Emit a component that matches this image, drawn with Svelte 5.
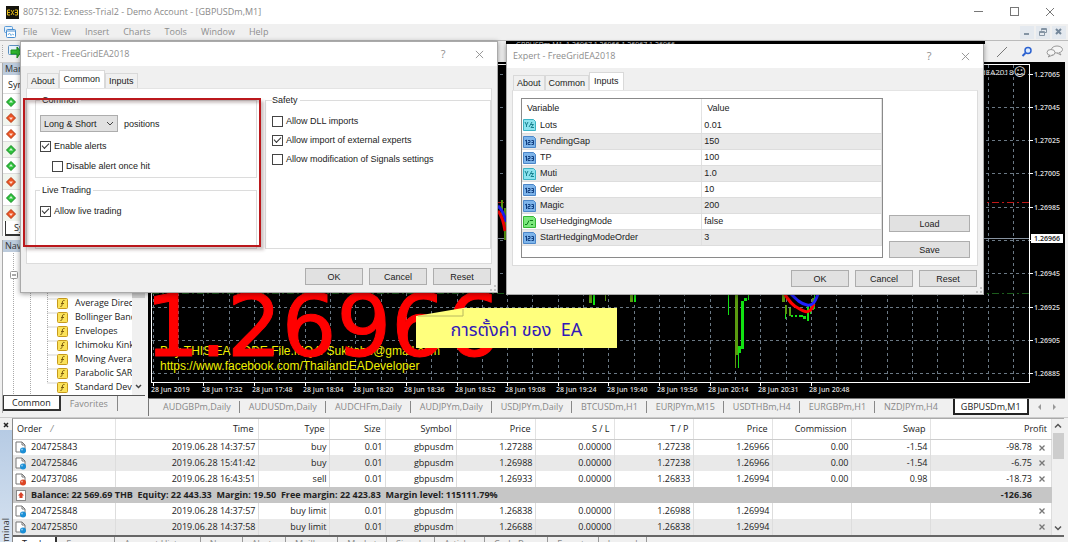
<script>
  const menus = ['File', 'View', 'Insert', 'Charts', 'Tools', 'Window', 'Help'];
  const ticks = ['up', 'down', 'down', 'up', 'up', 'down', 'up', 'down'];
  const indicators = ['Average Directional', 'Bollinger Bands', 'Envelopes', 'Ichimoku Kinko Hyo', 'Moving Average', 'Parabolic SAR', 'Standard Deviation'];
  const charts = ['AUDGBPm,Daily', 'AUDUSDm,Daily', 'AUDCHFm,Daily', 'AUDJPYm,Daily', 'USDJPYm,Daily', 'BTCUSDm,H1', 'EURJPYm,M15', 'USDTHBm,H4', 'EURGBPm,H1', 'NZDJPYm,H4', 'GBPUSDm,M1'];
  const times = ['28 Jun 2019', '28 Jun 17:32', '28 Jun 17:48', '28 Jun 18:04', '28 Jun 18:20', '28 Jun 18:36', '28 Jun 18:52', '28 Jun 19:08', '28 Jun 19:24', '28 Jun 19:40', '28 Jun 19:56', '28 Jun 20:14', '28 Jun 20:31', '28 Jun 20:48'];
  const prices = ['1.27065', '1.27045', '1.27025', '1.27005', '1.26985', '', '1.26945', '1.26925', '1.26905', '1.26885'];
  const inputs = [
    ['Lots', '0.01', 'real'],
    ['PendingGap', '150', 'int'],
    ['TP', '100', 'int'],
    ['Muti', '1.0', 'real'],
    ['Order', '10', 'int'],
    ['Magic', '200', 'int'],
    ['UseHedgingMode', 'false', 'bool'],
    ['StartHedgingModeOrder', '3', 'int']
  ];
  const columns = ['Time', 'Type', 'Size', 'Symbol', 'Price', 'S / L', 'T / P', 'Price', 'Commission', 'Swap'];
  const open = [
    ['204725843', '2019.06.28 14:37:57', 'buy', '0.01', 'gbpusdm', '1.27288', '0.00000', '1.27238', '1.26966', '0.00', '-1.54', '-98.78'],
    ['204725846', '2019.06.28 15:41:42', 'buy', '0.01', 'gbpusdm', '1.26988', '0.00000', '1.27238', '1.26966', '0.00', '-1.54', '-6.75'],
    ['204737086', '2019.06.28 16:43:51', 'sell', '0.01', 'gbpusdm', '1.26933', '0.00000', '1.26833', '1.26994', '0.00', '0.98', '-18.73']
  ];
  const pending = [
    ['204725848', '2019.06.28 14:37:57', 'buy limit', '0.01', 'gbpusdm', '1.26838', '0.00000', '1.26988', '1.26994', '', '', ''],
    ['204725850', '2019.06.28 14:37:58', 'buy limit', '0.01', 'gbpusdm', '1.26688', '0.00000', '1.26838', '1.26994', '', '', '']
  ];
  const terminalTabs = ['Trade', 'Exposure', 'Account History', 'News', 'Alerts', 'Mailbox', 'Market', 'Signals', 'Articles', 'Code Base', 'Experts', 'Journal'];
  // x, top, bottom, width, colour
  const olive = '#5a9a10', lime = '#12e212';
  const candles = [
    [501, 200, 214, 2, olive], [504, 208, 240, 2, olive], [506, 176, 200, 2, lime],
    [589, 294, 303, 3, olive], [593, 294, 305, 2, lime], [605, 294, 301, 1, olive],
    [630, 294, 302, 3, olive], [634, 294, 302, 2, lime],
    [728, 294, 315, 1, lime], [735, 294, 355, 3, olive], [735, 355, 368, 1, olive], [738, 346, 353, 3, lime],
    [738, 352, 368, 1, lime], [741, 301, 349, 3, lime], [744, 298, 301, 3, lime], [748, 294, 300, 1, lime],
    [782, 294, 302, 3, olive], [785, 305, 314, 2, olive], [785, 314, 319, 1, lime], [789, 308, 316, 2, olive],
    [791, 315, 317, 2, lime], [795, 315, 317, 2, lime], [799, 315, 317, 4, lime], [803, 316, 319, 3, lime],
    [807, 306, 321, 2, lime], [810, 306, 314, 1, lime], [812, 298, 310, 2, olive], [814, 294, 309, 1, lime]
  ];
</script>

{#snippet cross(size)}
  <svg width={size} height={size} viewBox="0 0 10 10"><path d="M1 1 9 9M9 1 1 9" fill="none" stroke="currentColor" /></svg>
{/snippet}

{#snippet orderIcon(colour)}
  <svg class="ico" width="12" height="13" viewBox="0 0 12 13">
    <path d="M1 1h6l3 3v7H1z" fill="#fff" stroke="#777" />
    <path d="M7 1v3h3" fill="none" stroke="#777" />
    <circle cx="8" cy="9.500" r="3" fill={colour} />
    <circle cx="7" cy="8.500" r="1" fill="#fff" opacity=".5" />
  </svg>
{/snippet}

{#snippet dealRow(row)}
  <tr>
    <td class="first">{@render orderIcon(row[2] === 'sell' ? '#dd4422' : '#1b8fd6')}{row[0]}</td>
    {#each row.slice(1, 11) as cell}<td>{cell}</td>{/each}
    <td class="profit">{row[11]}<button class="close" aria-label="Close order"><svg width="6" height="6"><path d="M.5.5l5 5M5.500.5l-5 5" stroke="#777" stroke-width="1.300" /></svg></button></td>
  </tr>
{/snippet}

{#snippet caption()}
  <header class="caption">
    <span>Expert - FreeGridEA2018</span>
    <button aria-label="Help">?</button>
    <button aria-label="Close">{@render cross(9)}</button>
  </header>
{/snippet}

{#snippet actions()}
  <footer>
    <button class="btn">OK</button>
    <button class="btn">Cancel</button>
    <button class="btn">Reset</button>
    <svg class="grip" width="6" height="6" viewBox="0 0 6 6"><path d="M4 0h2v2H4zM4 4h2v2H4zM0 4h2v2H0z" fill="#c4c4c4" /></svg>
  </footer>
{/snippet}

<div class="app">
  <header class="titlebar">
    <svg width="13" height="13" viewBox="0 0 13 13">
      <rect width="13" height="13" fill="#15130c" />
      <path d="M1.500 4H4M1.500 6.500H4M1.500 9H4M1.500 4v5M5 4l3 5M8 4 5 9M9 4h2.500v5H9M9 6.500h2" fill="none" stroke="#e0b818" />
    </svg>
    <h1>8075132: Exness-Trial2 - Demo Account - [GBPUSDm,M1]</h1>
    <div class="winbtns">
      <button aria-label="Minimize"><svg width="9" height="9"><path d="M0 4.500h9" stroke="#777" /></svg></button>
      <button aria-label="Maximize"><svg width="9" height="9"><rect x=".5" y=".5" width="8" height="8" fill="none" stroke="#777" /></svg></button>
      <button aria-label="Close">{@render cross(10)}</button>
    </div>
  </header>

  <nav class="menubar">
    <svg width="12" height="12" viewBox="0 0 12 12">
      <rect x=".5" y=".5" width="8" height="6" rx="1" fill="#e6f1fb" stroke="#5a9bd8" />
      <rect x="2.500" y="3.500" width="9" height="8" rx="1" fill="#fff" stroke="#4a8fd0" />
      <path d="M2.500 5h9" stroke="#4a8fd0" /><path d="M4 9l1.500-2L7 9.500 8.500 8l1.500 1" fill="none" stroke="#6faee2" />
    </svg>
    {#each menus as m}<button>{m}</button>{/each}
    <div class="mdi">
      <button aria-label="Minimize chart"><svg width="8" height="8"><path d="M1 6h5" stroke="#8494a4" stroke-width="2" /></svg></button>
      <button aria-label="Restore chart"><svg width="8" height="8"><path d="M2.500 2.500v-2h5v4h-2M2.500 1.500h5M.5 3.500h5v4h-5zM.5 4.500h5" fill="none" stroke="#8494a4" /></svg></button>
      <button aria-label="Close chart"><svg width="8" height="8"><path d="M1 1l5 5M6 1 1 6" stroke="#74879a" stroke-width="2" /></svg></button>
    </div>
  </nav>

  <div class="toolbar">
    <svg width="20" height="17" viewBox="0 0 20 17">
      <path d="M2.500 2v14" stroke="#aaa" stroke-dasharray="1 1" />
      <rect x="8.500" y="2.500" width="11" height="9" rx="1" fill="#e7f3fc" stroke="#5a8fc0" />
      <path d="M11 7h6V4l4 5-4 6v-4h-6z" fill="#2fb52f" stroke="#1c8f1c" />
    </svg>
    <div class="tools">
      <svg width="12" height="12"><path d="M1 11 11 1" stroke="#777" /></svg>
      <svg width="12" height="12" viewBox="0 0 12 12"><circle cx="7" cy="4.500" r="3" fill="#dcecff" stroke="#2c62d0" stroke-width="1.500" /><path d="M4.500 7 1.500 10" stroke="#2c62d0" stroke-width="2" /></svg>
      <svg width="18" height="13" viewBox="0 0 18 13"><ellipse cx="11" cy="4.500" rx="5.500" ry="3.500" fill="#f5f5f5" stroke="#999" /><path d="M13 7l2 3-4-2" fill="#f5f5f5" stroke="#999" /><ellipse cx="5" cy="7.500" rx="4" ry="3" fill="#f5f5f5" stroke="#999" /><path d="M4 10l-2 2 5-2" fill="#f5f5f5" stroke="#999" /></svg>
    </div>
  </div>

  <div class="workspace">
    <aside>
      <section class="watch">
        <h2>Market Watch</h2>
        <div class="symhead">Symbol</div>
        {#each ticks as t}
          <div class="sym">
            <svg width="10" height="10" viewBox="0 0 10 10">
              <path d="M5 .5 9.500 5 5 9.500.5 5z" fill={t === 'up' ? '#2cc23a' : '#ee5524'} stroke={t === 'up' ? '#168a24' : '#b33a14'} />
              <path d={t === 'up' ? 'M5 3 7 5.500H3z' : 'M5 7 7 4.500H3z'} fill="#fff" opacity=".8" />
            </svg>
          </div>
        {/each}
        <button class="sidetab on">Symbols</button>
      </section>
      <section class="navigator">
        <h2>Navigator</h2>
        <div class="tree">
          <svg class="branches" width="60" height="150">
            <path d="M9.500 0v150M26.500 0v150M43.500 0v138M43.500 54h9M43.500 68h9M43.500 82h9M43.500 96h9M43.500 110h9M43.500 124h9M43.500 138h9" fill="none" stroke="#aaa" stroke-dasharray="1 1" />
            <rect x="6.500" y="26.500" width="7" height="7" rx="1" fill="#fff" stroke="#999" /><path d="M8 30h4" stroke="#555" />
          </svg>
          <ul>
            {#each indicators as name}
              <li>
                <svg width="11" height="11" viewBox="0 0 11 11">
                  <rect x=".5" y=".5" width="10" height="10" rx="1" fill="#fbe25a" stroke="#c79a1c" />
                  <path d="M7.500 2.500c-2-.5-2 1-2.200 2.500S5 9 3.500 8.500M4 5.500h3" fill="none" stroke="#7a5a10" />
                </svg>
                <span>{name}</span>
              </li>
            {/each}
          </ul>
          <div class="treebar">
            <svg width="7" height="5"><path d="M1 1l2.500 2.500L6 1" fill="none" stroke="#444" stroke-width="1.500" /></svg>
          </div>
        </div>
        <div class="sidetabs">
          <button class="sidetab on">Common</button>
          <button class="sidetab">Favorites</button>
        </div>
      </section>
    </aside>

    <main>
      <div class="chart">
        <svg class="plot">
          <g transform="translate(-148 -62)">
            <path d="M152 64.500H3000M152 382.500H3000M151.500 64v319" stroke="#fff" />
            {#each { length: 60 } as _, i}
              <path d="M{Math.round(152.8 + i * 25.31) + 0.5} 65v317" stroke="#6b7985" stroke-dasharray="3 3" />
            {/each}
            {#each prices as _, i}
              <path d="M152 {Math.round(73.5 + i * 33.3) + 0.5}H3000" stroke="#6b7985" stroke-dasharray="3 3" />
            {/each}
            <path d="M152 202.500H3000" stroke="#c01818" stroke-dasharray="7 3 2 3" />
            <path d="M152 293.500H3000" stroke="#1c5c1c" stroke-dasharray="7 3 2 3" />
            <path d="M152 238.500H3000" stroke="#8793a0" />
            {#each candles as [x, y, b, w, c]}<rect {x} {y} width={w} height={b - y} fill={c} />{/each}
            <path d="M540 293.500h14M556 293.500h12M592 293.500h26M640 293.500h100M760 293.500h24" stroke="#d01010" stroke-width="2" />
            <path d="M498 206q5 4 8 16" fill="none" stroke="#2020ff" stroke-width="3" />
            <path d="M498 211q5 6 7 20" fill="none" stroke="#f00" stroke-width="3" />
            <path d="M784 293c5 8 8 12 14 15 8 5 12 6 16-4" fill="none" stroke="#f00" stroke-width="3" />
            <path d="M790 293c7 7 11 11 17 12 6 1 8-3 11-11" fill="none" stroke="#2020ff" stroke-width="3" />
            <text class="note" x="160" y="355">Buy THIS EA CODE File.MQ4: Sukitabe@gmail.com</text>
            <text class="note" x="160" y="370">https://www.facebook.com/ThailandEADeveloper</text>
            <text class="big" x="145" y="356">1.26966</text>
            {#each times as t, i}
              <path d="M{Math.round(152.8 + i * 50.62) + 0.5} 383v3" stroke="#fff" />
              <text class="tick" x={Math.round(151 + i * 50.62)} y="392">{t}</text>
            {/each}
          </g>
        </svg>
        <span class="eaname">FreeGridEA2018<b>☺</b></span>
        <svg class="axis">
          <path d="M.5 2v319" stroke="#fff" />
          {#each prices as p, i}
            <path d="M1 {Math.round(11.5 + i * 33.3) + 0.5}h3" stroke="#fff" />
            <text class="tick" x="5" y={Math.round(14.5 + i * 33.3)}>{p}</text>
          {/each}
          <rect x="2" y="172" width="32" height="9" fill="#fff" />
          <text class="tick now" x="5" y="179">1.26966</text>
        </svg>
        <div class="callout">
          <svg width="201" height="40"><path d="M0 8 47 0h154v40H0z" fill="#ffff7d" /><path d="M2 8h45V1" fill="none" stroke="#b8b860" /></svg>
          <p>การตั้งค่า ของ&nbsp; EA</p>
        </div>
      </div>
      <nav class="charttabs">
        {#each charts as c}<button class:on={c === 'GBPUSDm,M1'}>{c}</button>{/each}
        <span class="arrows"><svg width="20" height="6"><path d="M4 0v6L1 3zM16 0v6l3-3z" fill="#999" /></svg></span>
      </nav>
    </main>
  </div>

  <section class="terminal">
    <div class="strip">
      <button aria-label="Close terminal"><svg width="6" height="6"><path d="M1 1l4 4M5 1 1 5" stroke="#222" stroke-width="1.500" /></svg></button>
      <span>Terminal</span>
    </div>
    <div class="grid">
      <div class="scroller">
        <table>
          <colgroup>
            <col class="c-order" /><col class="c-time" /><col class="c-type" /><col class="c-size" /><col class="c-type" />
            <col class="c-num" /><col class="c-num" /><col class="c-num" /><col class="c-num" /><col class="c-num" /><col class="c-num" /><col />
          </colgroup>
          <thead>
            <tr>
              <th class="first">Order <i>/</i></th>
              {#each columns as c}<th>{c}</th>{/each}
              <th>Profit</th>
            </tr>
          </thead>
          <tbody>
            {#each open as row}{@render dealRow(row)}{/each}
            <tr class="balance">
              <td class="first" colspan="11">
                <svg class="ico" width="12" height="13" viewBox="0 0 12 13"><rect x="1.500" y="1.500" width="9" height="10" fill="#fff" stroke="#888" /><path d="M6 3l3 3.500H7.500V9h-3V6.500H3z" fill="#d8432a" /></svg>Balance: 22 569.69 THB&nbsp; Equity: 22 443.33&nbsp; Margin: 19.50&nbsp; Free margin: 22 423.83&nbsp; Margin level: 115111.79%
              </td>
              <td class="profit">-126.36</td>
            </tr>
            {#each pending as row}{@render dealRow(row)}{/each}
          </tbody>
        </table>
        <div class="vbar">
          <svg width="8" height="6"><path d="M1 4.500 4 1.500l3 3" fill="none" stroke="#555" stroke-width="1.500" /></svg>
          <div class="thumb"></div>
          <svg width="8" height="6"><path d="M1 1.500l3 3 3-3" fill="none" stroke="#555" stroke-width="1.500" /></svg>
        </div>
      </div>
      <nav class="termtabs">
        {#each terminalTabs as t, i}<button class:on={i === 0}>{t}</button>{/each}
      </nav>
    </div>
  </section>

  <section class="dialog left">
    {@render caption()}
    <nav class="tabs"><button>About</button><button class="on">Common</button><button>Inputs</button></nav>
    <div class="page two">
      <div class="col">
        <fieldset class="common">
          <legend>Common</legend>
          <label class="row">
            <span class="select"><select><option>Long &amp; Short</option></select><svg width="8" height="5"><path d="M1 1l3 3 3-3" fill="none" stroke="#444" /></svg></span>
            positions
          </label>
          <label class="check"><input type="checkbox" checked />Enable alerts</label>
          <label class="check inner"><input type="checkbox" />Disable alert once hit</label>
        </fieldset>
        <fieldset class="live">
          <legend>Live Trading</legend>
          <label class="check"><input type="checkbox" checked />Allow live trading</label>
        </fieldset>
      </div>
      <fieldset class="safety">
        <legend>Safety</legend>
        <label class="check"><input type="checkbox" />Allow DLL imports</label>
        <label class="check"><input type="checkbox" checked />Allow import of external experts</label>
        <label class="check"><input type="checkbox" />Allow modification of Signals settings</label>
      </fieldset>
    </div>
    {@render actions()}
    <div class="marker"></div>
  </section>

  <section class="dialog right">
    <div class="sliver">GBPUSDm,M1&nbsp; 1.26967 1.26966 1.26967 1.26966</div>
    {@render caption()}
    <nav class="tabs"><button>About</button><button>Common</button><button class="on">Inputs</button></nav>
    <div class="page">
      <div class="list">
        <table>
          <thead><tr><th>Variable</th><th>Value</th></tr></thead>
          <tbody>
            {#each inputs as [name, value, kind]}
              <tr>
                <td>
                  <svg class="ico" width="13" height="12" viewBox="0 0 13 12">
                    <path d="M.5.5h10l2 2v9H.5z" fill={kind === 'int' ? '#7db4ea' : kind === 'real' ? '#8be3ee' : '#7be87b'} stroke={kind === 'int' ? '#4b86c8' : kind === 'real' ? '#3bb3c4' : '#35b535'} />
                    {#if kind === 'int'}
                      <path d="M2 5l1.500-1v5M5 4.500h2v2H5v2h2.500M8.500 4.500h2v4h-2M8.500 6.500h2" fill="none" stroke="#123f80" />
                    {:else if kind === 'real'}
                      <path d="M2 3l1.500 3L5 3M3.500 6v2M6 8l3-5M8 5.500h2.500L8 8.500h3" fill="none" stroke="#17808e" />
                    {:else}
                      <path d="M2 8.500h2l2-4M7 4.500h3M8 8.500h2" fill="none" stroke="#0f7d1c" />
                    {/if}
                  </svg>{name}
                </td>
                <td>{value}</td>
              </tr>
            {/each}
          </tbody>
        </table>
      </div>
      <div class="side">
        <button class="btn">Load</button>
        <button class="btn">Save</button>
      </div>
    </div>
    {@render actions()}
  </section>
</div>

<style>
  :global(body) { margin: 0; background: #f0f0f0; }
  .app { position: relative; height: 100vh; display: flex; flex-direction: column; overflow: hidden; background: #f0f0f0; color: #222; font: 9px/12px 'Open Sans', 'Noto Sans', sans-serif; }
  .app * { box-sizing: border-box; }
  button, select { font: inherit; color: inherit; background: none; border: 0; padding: 0; margin: 0; }
  svg { flex: none; display: block; }
  h1, h2, p, ul { margin: 0; padding: 0; font: inherit; list-style: none; }

  .titlebar { flex: none; height: 24px; display: flex; align-items: center; gap: 4px; padding-left: 6px; background: #fff; color: #8a8a8a; }
  .titlebar h1 { flex: 1; }
  .winbtns { display: flex; color: #777; }
  .winbtns button { width: 36px; display: flex; justify-content: center; }
  .menubar { flex: none; height: 17px; display: flex; align-items: center; gap: 14px; padding-left: 4px; border-bottom: 1px solid #bbb; color: #8e8e8e; }
  .menubar > svg { margin-right: -7px; }
  .mdi { display: flex; gap: 2px; margin-left: auto; padding-right: 2px; }
  .mdi button { width: 14px; height: 13px; display: grid; place-items: center; background: #e4e9ef; }
  .toolbar { flex: none; height: 21px; display: flex; align-items: center; justify-content: space-between; padding-right: 4px; }
  .tools { display: flex; align-items: center; gap: 13px; }

  .workspace { flex: 1; display: flex; min-height: 0; }
  aside { flex: none; width: 148px; display: flex; flex-direction: column; padding: 0 3px 4px 2px; border-top: 1px solid #ccc; }
  h2 { height: 12px; padding-left: 2px; background: #bccbdc; color: #333; line-height: 12px; white-space: nowrap; }
  .watch { flex: none; border-left: 1px solid #aaa; background: #fff; }
  .symhead { height: 18px; padding: 4px 5px; }
  .sym { height: 16px; display: flex; align-items: center; padding-left: 3px; border-top: 1px solid #ddd; }
  .sym:nth-of-type(odd) { background: #f1f5ee; }
  .sidetab { height: 15px; padding: 0 9px; color: #8a8a8a; border-right: 1px solid #888; }
  .sidetab.on { padding: 0 8px; background: #fff; color: #222; border: solid #333; border-width: 0 2px 2px 1px; }
  .watch > .sidetab { margin-left: 2px; }
  .navigator { flex: 1; min-height: 0; display: flex; flex-direction: column; margin-top: 4px; border-left: 1px solid #aaa; }
  .tree { flex: 1; min-height: 0; display: flex; align-items: flex-end; background: #fff; position: relative; overflow: hidden; }
  .branches { position: absolute; left: 1px; bottom: 0; }
  ul { flex: 1; min-width: 0; padding: 0 0 1px 54px; }
  li { height: 14px; display: flex; align-items: center; gap: 7px; overflow: hidden; white-space: nowrap; }
  .treebar { flex: none; width: 13px; align-self: stretch; display: flex; justify-content: center; align-items: flex-end; padding-bottom: 6px; background: linear-gradient(#cdcdcd 46px, #f0f0f0 46px); }
  .sidetabs { flex: none; height: 18px; border-top: 1px solid #555; display: flex; }

  main { flex: 1; min-width: 0; display: flex; flex-direction: column; padding-right: 3px; }
  .chart { position: relative; flex: none; height: 336px; display: flex; background: #000; }
  .plot { flex: 1; min-width: 0; height: 336px; overflow: hidden; }
  .axis { width: 36px; height: 336px; }
  .tick { font: 600 7px 'Open Sans', sans-serif; fill: #ddd; }
  .now { fill: #111; }
  .note { font: 12px 'Liberation Sans', sans-serif; fill: #f0f000; }
  .big { font: 86px 'DejaVu Sans', sans-serif; fill: #f00; stroke: #f00; stroke-width: 1px; stroke-linejoin: round; }
  .eaname { position: absolute; right: 39px; top: 3px; display: flex; align-items: center; color: #e8e8e8; font-size: 8px; line-height: 14px; }
  .eaname b { font: 12px/14px 'DejaVu Sans', sans-serif; }
  .callout { position: absolute; left: 268px; top: 246px; display: grid; }
  .callout > * { grid-area: 1 / 1; }
  .callout p { align-self: center; text-align: center; font: 18px/24px 'Noto Sans Thai', 'Noto Sans', sans-serif; color: #3118b8; padding-top: 6px; }
  .charttabs { flex: none; height: 18px; display: flex; border-top: 1px solid #777; border-left: 1px solid #777; padding-left: 5px; color: #888; }
  .charttabs button { flex: none; height: 12px; margin: 2px 0; padding: 0 8px 0 9px; border-right: 1px solid #888; }
  .charttabs button.on { height: 16px; margin: 0; background: #fff; color: #222; border: solid #222; border-width: 0 2px 2px 2px; padding: 2px 6px 0; }
  .charttabs button:nth-last-child(3) { border-color: transparent; padding-right: 14px; }
  .arrows { margin: 5px auto 0; }

  .terminal { flex: none; height: 125px; display: flex; overflow: hidden; border-top: 1px solid #ccc; }
  .strip { flex: none; width: 12px; display: flex; flex-direction: column; align-items: center; padding-top: 4px; background: linear-gradient(#f0f0f0 12px, #b6cbe4 12px, #d6e2f0); }
  .strip span { writing-mode: vertical-rl; transform: rotate(180deg); margin-top: 90px; color: #333; }
  .grid { flex: 1; min-width: 0; border-left: 1px solid #888; border-top: 1px solid #aaa; margin-right: 4px; }
  .scroller { display: flex; border-bottom: 2px solid #666; }
  table { border-collapse: collapse; table-layout: fixed; background: #fff; }
  .scroller table { flex: 1; width: 100%; }
  .c-order { width: 102px; } .c-time { width: 143px; } .c-type { width: 71px; } .c-size { width: 56px; } .c-num { width: 79px; }
  th, td { font-weight: 400; padding: 0; white-space: nowrap; }
  .scroller th { height: 20px; padding: 0 4px; text-align: right; border-right: 1px solid #e3e3e3; border-bottom: 1px solid #ccc; }
  .scroller td { height: 16px; padding: 0 2px; text-align: right; border-right: 1px solid #ddd; line-height: 14px; }
  .scroller .first { text-align: left; }
  .scroller th i { color: #888; margin-left: 6px; }
  .scroller tbody tr:nth-child(even) { background: #e9e9e9; }
  .scroller tbody .balance, .scroller tbody .balance:nth-child(even) { background: #c6c6c6; }
  .scroller .balance td { font-weight: 700; border-color: #c6c6c6; }
  .ico { display: inline-block; vertical-align: middle; margin-right: 4px; }
  .scroller .profit { padding-right: 19px; position: relative; }
  .close { position: absolute; right: 6px; top: 5px; line-height: 0; }
  .vbar { flex: none; width: 12px; display: flex; flex-direction: column; align-items: center; padding: 4px 0; background: #f0f0f0; }
  .thumb { width: 11px; height: 26px; margin: 4px 0 auto; background: #cdcdcd; }
  .termtabs { display: flex; color: #888; }
  .termtabs button { padding: 0 9px; height: 14px; border-right: 1px solid #999; }
  .termtabs .on { color: #222; background: #fff; border-right: 2px solid #333; }

  .dialog { position: absolute; width: 478px; display: flex; flex-direction: column; background: #f0f0f0; border: 1px solid #aaa; box-shadow: 0 1px 5px rgba(0, 0, 0, .4); color: #222; font: 9px/12px 'Liberation Sans', Arial, sans-serif; }
  .dialog.left { left: 20px; top: 41px; }
  .dialog.right { left: 506px; top: 43px; }
  .sliver { position: absolute; left: -1px; right: -2px; bottom: 100%; height: 3px; overflow: hidden; padding-left: 10px; background: #000; color: #ccc; font: 7px/8px 'Open Sans', sans-serif; }
  .caption { height: 24px; display: flex; align-items: center; padding: 0 13px 0 6px; background: #fff; color: #8d8d8d; font: 9px/12px 'Open Sans', sans-serif; }
  .caption span { flex: 1; }
  .caption button { width: 30px; display: flex; justify-content: center; font-size: 11px; }
  .caption button:last-child { justify-content: flex-end; width: 26px; }
  .tabs { height: 22px; display: flex; align-items: flex-end; padding-left: 6px; }
  .tabs button { height: 15px; padding: 0 3px; border: 1px solid #d9d9d9; border-bottom: 0; }
  .tabs .on { height: 18px; padding: 0 4px 2px; background: #fff; border-color: #d9d9d9; }
  .page { height: 176px; margin: 0 5px; padding: 7px 7px 7px 8px; background: #fff; border: 1px solid #dcdcdc; border-top-color: #e4e4e4; display: flex; gap: 6px; }
  .two { gap: 8px; padding: 5px 0 14px 8px; }
  .col { width: 222px; display: flex; flex-direction: column; }
  fieldset { margin: 0; padding: 9px 4px 0; border: 1px solid #dcdcdc; min-width: 0; }
  legend { padding: 0 2px; height: 12px; }
  .common { height: 84px; display: flex; flex-direction: column; gap: 8px; }
  .live { flex: 1; margin-top: 6px; }
  .safety { flex: 1; display: flex; flex-direction: column; gap: 7px; padding-left: 6px; }
  .safety legend { padding: 0 2px 0 0; }
  .row { display: flex; align-items: center; gap: 6px; }
  .select { display: grid; align-items: center; width: 78px; height: 17px; background: #e1e1e1; border: 1px solid #adadad; }
  .select > * { grid-area: 1 / 1; }
  .select svg { justify-self: end; margin-right: 3px; }
  select { appearance: none; padding-left: 3px; }
  .check { display: flex; align-items: center; gap: 3px; }
  .inner { margin-left: 12px; }
  input { appearance: none; width: 11px; height: 11px; margin: 0; border: 1px solid #444; background: #fff; display: grid; place-items: center; }
  input:checked::before { content: ''; width: 6px; height: 3px; border: solid #333; border-width: 0 0 1px 1px; transform: translateY(-1px) rotate(-45deg); }
  footer { display: flex; justify-content: flex-end; gap: 6px; padding: 4px 6px 7px; position: relative; }
  .btn { width: 58px; height: 17px; background: #e1e1e1; border: 1px solid #adadad; }
  .grip { position: absolute; right: 1px; bottom: 1px; }
  .marker { position: absolute; left: 2px; top: 56px; width: 238px; height: 149px; border: 2px solid #bb181c; box-shadow: 3px 3px 3px rgba(90, 60, 60, .3), inset 3px 3px 3px rgba(90, 60, 60, .3); }
  .list { flex: none; width: 362px; border: 1px solid #8a8a8a; }
  .list table { width: 100%; }
  .list th { height: 18px; padding-left: 5px; text-align: left; border-right: 1px solid #e3e3e3; }
  .list td { height: 16px; padding-left: 1px; line-height: 14px; border-bottom: 1px solid #ddd; border-right: 1px solid #e0e0e0; }
  .list td + td { padding-left: 2px; }
  .list tbody tr:nth-child(even) { background: #e9e9e9; }
  .side { flex: 1; display: flex; flex-direction: column; justify-content: flex-end; gap: 9px; }
  .side .btn { width: 100%; }
</style>
